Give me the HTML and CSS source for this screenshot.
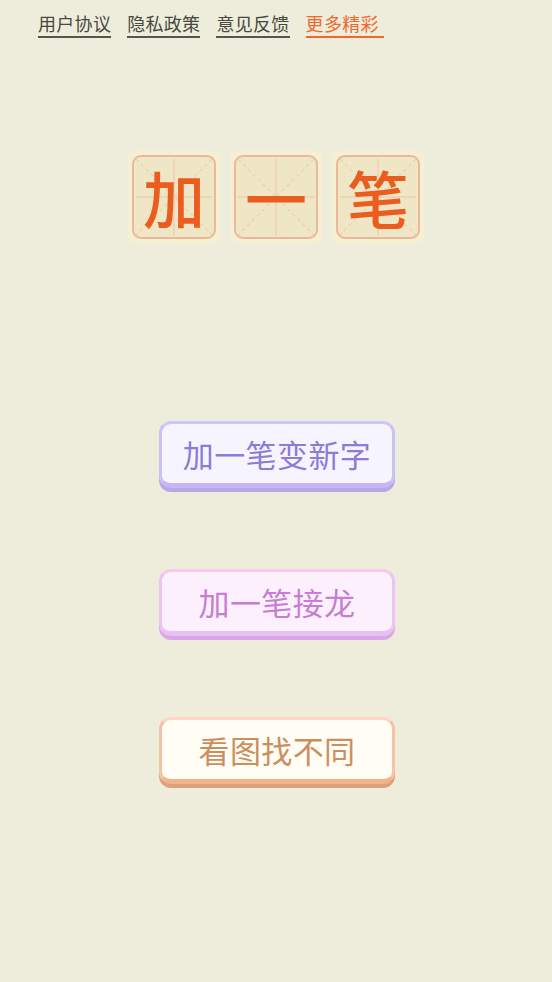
FILE: index.html
```html
<!DOCTYPE html>
<html lang="zh-CN">
<head>
  <meta charset="UTF-8">
  <meta name="viewport" content="width=device-width, initial-scale=1.0">
  <title>加一笔</title>
  <link rel="stylesheet" href="styles.css">
</head>
<body>
  <nav class="top-links">
    <a class="link" href="#">用户协议</a>
    <a class="link" href="#">隐私政策</a>
    <a class="link" href="#">意见反馈</a>
    <a class="link link-more" href="#">更多精彩</a>
  </nav>

  <div class="title">
    <div class="tile">
      <div class="tile-box">
        <svg class="grid" viewBox="0 0 100 100" preserveAspectRatio="none">
          <line x1="0" y1="0" x2="100" y2="100" class="dash" />
          <line x1="100" y1="0" x2="0" y2="100" class="dash" />
          <line x1="50" y1="0" x2="50" y2="100" />
          <line x1="0" y1="50" x2="100" y2="50" />
        </svg>
        <span class="char">加</span>
      </div>
    </div>
    <div class="tile">
      <div class="tile-box">
        <svg class="grid" viewBox="0 0 100 100" preserveAspectRatio="none">
          <line x1="0" y1="0" x2="100" y2="100" class="dash" />
          <line x1="100" y1="0" x2="0" y2="100" class="dash" />
          <line x1="50" y1="0" x2="50" y2="100" />
          <line x1="0" y1="50" x2="100" y2="50" />
        </svg>
        <span class="char">一</span>
      </div>
    </div>
    <div class="tile">
      <div class="tile-box">
        <svg class="grid" viewBox="0 0 100 100" preserveAspectRatio="none">
          <line x1="0" y1="0" x2="100" y2="100" class="dash" />
          <line x1="100" y1="0" x2="0" y2="100" class="dash" />
          <line x1="50" y1="0" x2="50" y2="100" />
          <line x1="0" y1="50" x2="100" y2="50" />
        </svg>
        <span class="char">笔</span>
      </div>
    </div>
  </div>

  <div class="menu">
    <button class="btn btn-purple">加一笔变新字</button>
    <button class="btn btn-pink">加一笔接龙</button>
    <button class="btn btn-orange">看图找不同</button>
  </div>
</body>
</html>
```

FILE: styles.css
```css
* {
  margin: 0px;
  padding: 0px;
  box-sizing: border-box;
  font-family: "Noto Sans CJK SC", "Noto Sans", sans-serif;
}

body {
  width: 552px;
  height: 982px;
  background-color: #eeeddb;
}

.top-links {
  display: flex;
  gap: 16px;
  padding: 11px 0px 0px 38px;
}

.link {
  font-size: 18px;
  line-height: 25px;
  font-weight: 400;
  letter-spacing: 0.3px;
  color: #48483f;
  text-decoration: none;
  border-bottom: 2px solid #55554f;
}

.link-more {
  color: #f0692c;
  border-bottom-color: #f0692c;
  padding-right: 5px;
}

.title {
  display: flex;
  justify-content: center;
  gap: 10px;
  margin-top: 113px;
}

.tile {
  width: 92px;
  height: 92px;
  padding: 4px;
  border-radius: 7px;
  background-color: #f5efd4;
}

.tile-box {
  position: relative;
  width: 100%;
  height: 100%;
  border: 2px solid #ebb99a;
  border-radius: 9px;
  background-color: #efe6c6;
  display: flex;
  align-items: center;
  justify-content: center;
}

.grid {
  position: absolute;
  left: 2px;
  top: 2px;
  width: calc(100% - 4px);
  height: calc(100% - 4px);
}

.grid line {
  stroke: #f0c3a8;
  stroke-width: 1;
  vector-effect: non-scaling-stroke;
}

.grid .dash {
  stroke-dasharray: 4 3;
}

.char {
  position: relative;
  font-size: 62px;
  line-height: 80px;
  font-weight: 500;
  color: #ea5d1e;
}

.menu {
  display: flex;
  flex-direction: column;
  align-items: center;
  gap: 81px;
  margin-top: 178px;
}

.btn {
  width: 236px;
  height: 67px;
  margin-left: 2px;
  border-radius: 12px;
  border: 3px solid;
  border-bottom-width: 5px;
  font-size: 31px;
  line-height: 1;
  font-weight: 400;
  letter-spacing: 0.4px;
  cursor: pointer;
}

.btn-purple {
  color: #8d7bd6;
  background-color: #f6f5ff;
  border-color: #cbc7fb #c9c2f8 #c6b7f4 #c9c2f8;
  box-shadow: 0px 4px 0px #b9a6ea;
}

.btn-pink {
  color: #c67dd4;
  background-color: #fdf0fd;
  border-color: #f8c9e7 #ecc4f3 #e9c0f5 #ecc4f3;
  box-shadow: 0px 4px 0px #d8a7e6;
}

.btn-orange {
  color: #cb8f5f;
  background-color: #fffdf4;
  border-color: #fcd6c6 #f6c3a6 #f3b28b #f6c3a6;
  box-shadow: 0px 4px 0px #d7a27c;
}
```
